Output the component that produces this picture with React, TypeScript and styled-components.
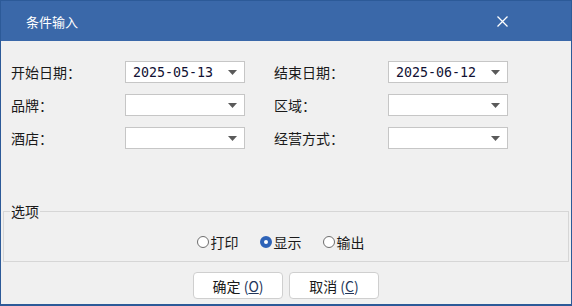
import React from 'react';
import styled, { createGlobalStyle } from 'styled-components';

const FONT = `"Noto Sans CJK SC", "Microsoft YaHei", "Noto Sans", sans-serif`;

const GlobalStyle = createGlobalStyle`
  html, body {
    margin: 0;
    padding: 0;
    background: #f0f0f0;
  }
  * {
    box-sizing: border-box;
  }
`;

type Field = { label: string; value: string };

const LEFT_FIELDS: Field[] = [
  { label: '开始日期：', value: '2025-05-13' },
  { label: '品牌：', value: '' },
  { label: '酒店：', value: '' },
];

const RIGHT_FIELDS: Field[] = [
  { label: '结束日期：', value: '2025-06-12' },
  { label: '区域：', value: '' },
  { label: '经营方式：', value: '' },
];

const OUTPUT_OPTIONS = ['打印', '显示', '输出'];

function ArrowDown() {
  return (
    <svg width="9" height="5" viewBox="0 0 9 5">
      <path d="M0 0 H9 L4.5 5 Z" fill="#5a5a5a" />
    </svg>
  );
}

function FieldColumn({ fields }: { fields: Field[] }) {
  return (
    <Column>
      {fields.map((field) => (
        <FieldRow key={field.label}>
          <Label>{field.label}</Label>
          <Combo>
            <ComboValue>{field.value}</ComboValue>
            <ArrowDown />
          </Combo>
        </FieldRow>
      ))}
    </Column>
  );
}

export default function App() {
  const [mode, setMode] = React.useState('显示');

  return (
    <>
      <GlobalStyle />
      <Window>
        <TitleBar>
          <Title>条件输入</Title>
          <CloseButton aria-label="关闭">
            <svg width="11" height="11" viewBox="0 0 11 11">
              <path d="M0.5 0.5 L10.5 10.5 M10.5 0.5 L0.5 10.5" stroke="#fff" strokeWidth="1.3" />
            </svg>
          </CloseButton>
        </TitleBar>

        <Body>
          <FieldGrid>
            <FieldColumn fields={LEFT_FIELDS} />
            <FieldColumn fields={RIGHT_FIELDS} />
          </FieldGrid>

          <Options>
            <Legend>选项</Legend>
            <RadioRow>
              {OUTPUT_OPTIONS.map((option) => (
                <RadioLabel key={option} onClick={() => setMode(option)}>
                  <RadioDot $checked={option === mode} />
                  {option}
                </RadioLabel>
              ))}
            </RadioRow>
          </Options>

          <ButtonRow>
            <Button>
              确定 <Mnemonic>(<u>O</u>)</Mnemonic>
            </Button>
            <Button>
              取消 <Mnemonic>(<u>C</u>)</Mnemonic>
            </Button>
          </ButtonRow>
        </Body>
      </Window>
    </>
  );
}

const Window = styled.div`
  width: 572px;
  height: 306px;
  display: flex;
  flex-direction: column;
  background: #f0f0f0;
  border-left: 1px solid #2c5a98;
  border-right: 1px solid #2c5a98;
  border-bottom: 2px solid #2c5a98;
  font-family: ${FONT};
  color: #1a1a1a;
`;

const TitleBar = styled.div`
  height: 41px;
  flex-shrink: 0;
  display: flex;
  align-items: center;
  justify-content: space-between;
  padding: 0 0 0 25px;
  background: #3a68a9;
  border-top: 1px solid #2c5a98;
`;

const Title = styled.span`
  color: #ffffff;
  font-size: 13px;
`;

const CloseButton = styled.button`
  width: 40px;
  height: 40px;
  margin-right: 49px;
  display: flex;
  align-items: center;
  justify-content: center;
  padding: 0;
  border: none;
  background: transparent;
  cursor: pointer;
`;

const Body = styled.div`
  flex: 1;
  display: flex;
  flex-direction: column;
  padding: 20px 2px 0 2px;
`;

const FieldGrid = styled.div`
  display: flex;
  gap: 29px;
  padding-left: 8px;
`;

const Column = styled.div`
  display: flex;
  flex-direction: column;
  gap: 11px;
`;

const FieldRow = styled.div`
  display: flex;
  align-items: center;
  height: 22px;
`;

const Label = styled.span`
  width: 114px;
  font-size: 14px;
  white-space: nowrap;
`;

const Combo = styled.div`
  width: 120px;
  height: 22px;
  display: flex;
  align-items: center;
  justify-content: space-between;
  padding: 0 7px 0 7px;
  background: #ffffff;
  border: 1px solid #c6c6c6;
`;

const ComboValue = styled.span`
  font-family: "DejaVu Sans Mono", "Liberation Mono", monospace;
  font-size: 13.3px;
  color: #111133;
`;

const Options = styled.fieldset`
  margin: 54px 0 0 0;
  padding: 0;
  height: 59px;
  border: 1px solid #d6d6d6;
`;

const Legend = styled.legend`
  margin-left: 6px;
  padding: 0 1px;
  font-size: 14px;
  line-height: 16px;
`;

const RadioRow = styled.div`
  display: flex;
  justify-content: center;
  gap: 21px;
  padding-top: 15px;
  padding-right: 11px;
`;

const RadioLabel = styled.label`
  display: flex;
  align-items: center;
  gap: 2px;
  font-size: 14px;
  line-height: 16px;
  cursor: pointer;
`;

const RadioDot = styled.span<{ $checked: boolean }>`
  width: 12px;
  height: 12px;
  border-radius: 50%;
  background: #ffffff;
  border: ${(p) => (p.$checked ? '4px solid #2e63b8' : '1px solid #6e6e6e')};
`;

const ButtonRow = styled.div`
  display: flex;
  justify-content: center;
  gap: 6px;
  margin-top: 10px;
`;

const Button = styled.button`
  width: 90px;
  height: 27px;
  padding: 0;
  background: #ffffff;
  border: 1px solid #cfcfcf;
  border-radius: 4px;
  font-family: ${FONT};
  font-size: 14px;
  color: #1a1a1a;
  cursor: pointer;
`;

const Mnemonic = styled.span`
  font-size: 14px;
  color: #22355a;
`;
